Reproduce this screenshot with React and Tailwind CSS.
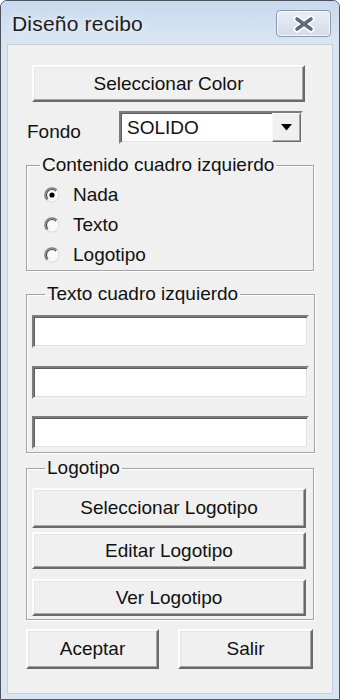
import React from "react";

const raised =
  "bg-[#f0f0f0] border-2 border-t-[#fdfdfd] border-l-[#fdfdfd] border-b-[#6a6a6a] border-r-[#6a6a6a] shadow-[inset_-1px_-1px_0_#a6a6a6,inset_1px_1px_0_#e6e6e6]";
const sunken =
  "bg-white border-2 border-t-[#7c7c7c] border-l-[#7c7c7c] border-b-[#f2f2f2] border-r-[#f2f2f2] shadow-[inset_1px_1px_0_#5e5e5e,inset_-1px_-1px_0_#e2e2e2]";

function Btn({ className, children }) {
  return (
    <div className={`${raised} flex items-center justify-center text-[19px] leading-[20px] text-[#111] ${className}`}>
      {children}
    </div>
  );
}

function Radio({ checked }) {
  return (
    <svg width="16" height="16" viewBox="0 0 16 16" className="shrink-0">
      <circle cx="8" cy="8" r="7" fill="#f9f9f9" />
      <path d="M3.05 12.95 A7 7 0 0 1 12.95 3.05" fill="none" stroke="#7e7e7e" strokeWidth="1.6" />
      <path d="M4.1 11.9 A5.5 5.5 0 0 1 11.9 4.1" fill="none" stroke="#3e3e3e" strokeWidth="1.1" />
      <path d="M12.95 3.05 A7 7 0 0 1 3.05 12.95" fill="none" stroke="#e2e2e2" strokeWidth="1.3" />
      {checked && <circle cx="8" cy="8" r="2.6" fill="#000" />}
    </svg>
  );
}

function Group({ title, className, children }) {
  return (
    <fieldset
      className={`ml-[18px] w-[288px] border border-[#a3a3a3] shadow-[inset_1px_1px_0_#ffffff,1px_1px_0_#ffffff] ${className}`}
    >
      <legend className="ml-[13px] px-[2px] text-[19px] leading-[20px] text-[#111]">{title}</legend>
      {children}
    </fieldset>
  );
}

export default function App() {
  const font = { fontFamily: '"Liberation Sans", Arial, sans-serif' };
  return (
    <div
      style={font}
      className="w-[340px] h-[700px] bg-[#dae5f2] border border-[#4d535c] rounded-t-[7px] flex flex-col overflow-hidden"
    >
      {/* Title bar */}
      <div className="h-[44px] flex items-start justify-between pl-[11px] pr-[8px] bg-gradient-to-b from-[#c8d9ee] to-[#dbe6f3]">
        <div className="mt-[11px] text-[21px] leading-[24px] tracking-[0.2px] text-[#1c1c1c] [text-shadow:0_0_6px_#ffffff]">
          Diseño recibo
        </div>
        <div className="mt-[9px] w-[55px] h-[27px] rounded-[4px] border border-[#8b99ad] bg-gradient-to-b from-[#e9eef5] to-[#d3dce8] shadow-[inset_0_0_0_1px_#f4f7fb] flex items-center justify-center">
          <svg width="26" height="18" viewBox="0 0 26 18">
            <path d="M6 4 L20 14 M20 4 L6 14" stroke="#ffffff" strokeWidth="7" strokeLinecap="round" />
            <path d="M6 4 L20 14 M20 4 L6 14" stroke="#636c7a" strokeWidth="3.6" strokeLinecap="round" />
          </svg>
        </div>
      </div>

      {/* Client area */}
      <div className="flex-1 mx-[7px] mb-[6px] bg-[#f0f0f0] shadow-[0_0_0_1px_#c3cfdf] flex flex-col">
        <Btn className="mt-[20px] ml-[24px] w-[273px] h-[37px]">Seleccionar Color</Btn>

        <div className="mt-[9px] flex items-start">
          <div className="ml-[19px] mt-[11px] w-[92px] text-[19px] leading-[20px] text-[#111]">Fondo</div>
          <div className={`${sunken} w-[184px] h-[33px] flex items-stretch`}>
            <div className="flex-1 pl-[6px] flex items-center text-[19px] leading-[20px] text-[#111]">SOLIDO</div>
            <div className="w-[29px] bg-[#f0f0f0] border border-t-[#f8f8f8] border-l-[#f8f8f8] border-b-[#6a6a6a] border-r-[#6a6a6a] shadow-[inset_-1px_-1px_0_#a6a6a6] flex items-center justify-center">
              <svg width="11" height="7" viewBox="0 0 11 7">
                <path d="M0 0 H11 L5.5 6.5 Z" fill="#000" />
              </svg>
            </div>
          </div>
        </div>

        <Group title="Contenido cuadro izquierdo" className="mt-[11px] pt-[5px]">
          {[
            ["Nada", true],
            ["Texto", false],
            ["Logotipo", false],
          ].map(([label, checked]) => (
            <div key={label} className="h-[30px] pl-[17px] flex items-center gap-[13px]">
              <Radio checked={checked} />
              <span className="text-[19px] leading-[20px] text-[#111]">{label}</span>
            </div>
          ))}
        </Group>

        <Group title="Texto cuadro izquierdo" className="mt-[13px] px-[5px] pb-[3px]">
          <div className={`${sunken} mt-[11px] w-[277px] h-[33px]`} />
          <div className={`${sunken} mt-[18px] w-[277px] h-[33px]`} />
          <div className={`${sunken} mt-[17px] w-[277px] h-[33px]`} />
        </Group>

        <Group title="Logotipo" className="mt-[5px] px-[5px] pb-[3px]">
          <Btn className="mt-[10px] w-[274px] h-[40px]">Seleccionar Logotipo</Btn>
          <Btn className="mt-[4px] w-[274px] h-[37px]">Editar Logotipo</Btn>
          <Btn className="mt-[10px] w-[274px] h-[37px]">Ver Logotipo</Btn>
        </Group>

        <div className="mt-[9px] ml-[18px] flex gap-[19px]">
          <Btn className="w-[133px] h-[40px]">Aceptar</Btn>
          <Btn className="w-[135px] h-[40px]">Salir</Btn>
        </div>
      </div>
    </div>
  );
}
